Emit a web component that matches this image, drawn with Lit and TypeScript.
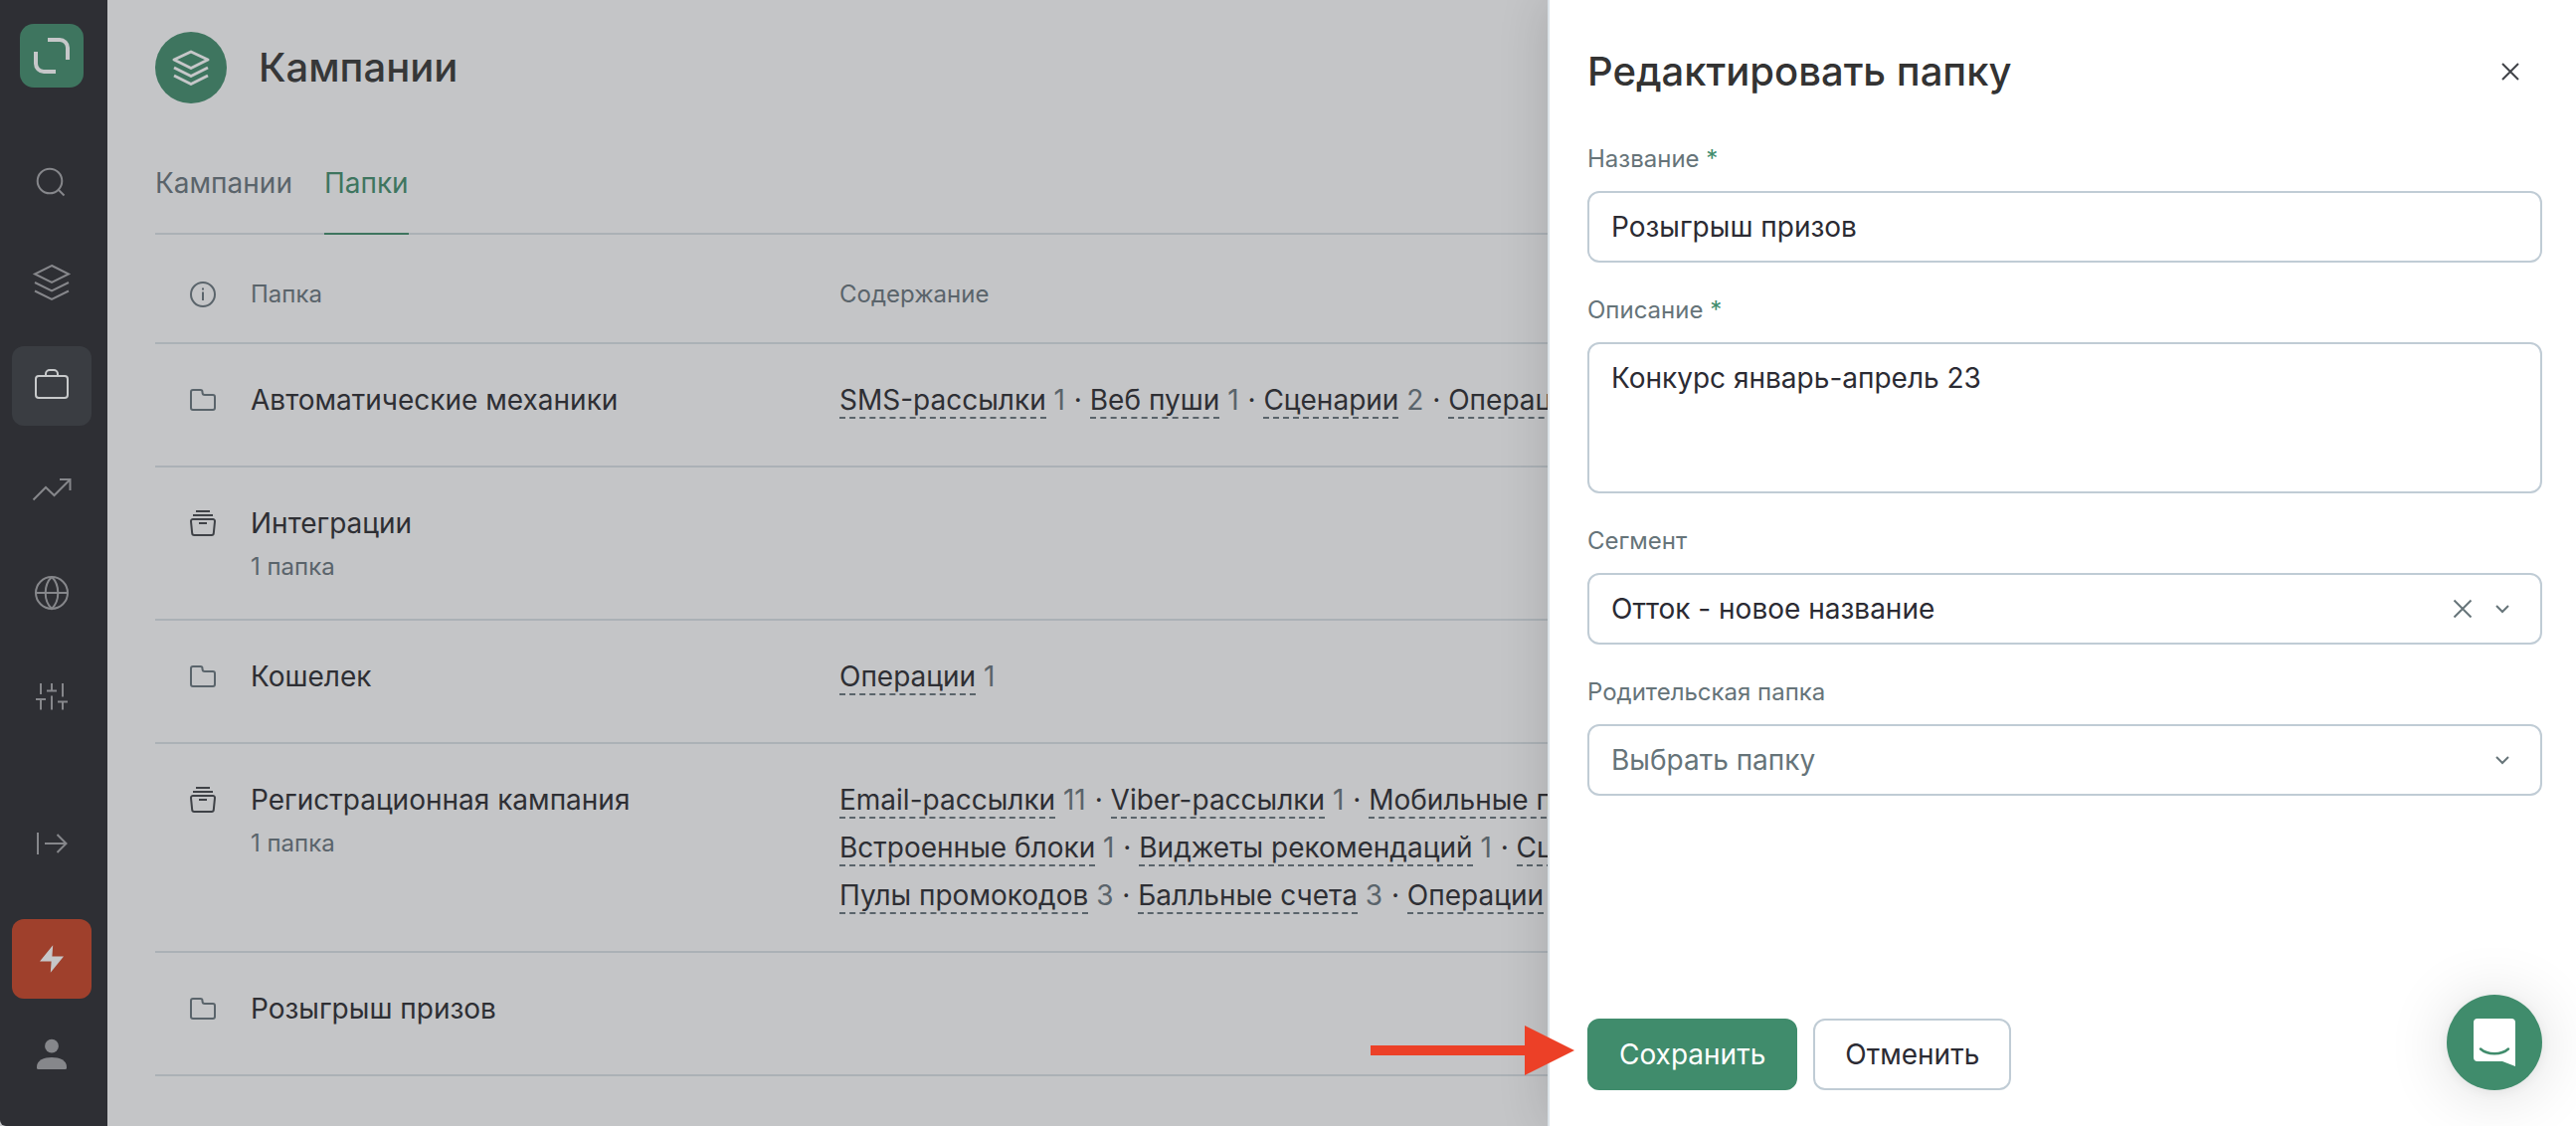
import { LitElement, html, css, svg } from "lit";
import { customElement, property, state } from "lit/decorators.js";
import { classMap } from "lit/directives/class-map.js";

type LinkItem = { label: string; count?: number };
type Row = { kind: "folder" | "archive"; name: string; note?: string; lines: LinkItem[][] };

const rows: Row[] = [
  {
    kind: "folder",
    name: "Автоматические механики",
    lines: [
      [
        { label: "SMS-рассылки", count: 1 },
        { label: "Веб пуши", count: 1 },
        { label: "Сценарии", count: 2 },
        { label: "Операции" },
      ],
    ],
  },
  { kind: "archive", name: "Интеграции", note: "1 папка", lines: [] },
  { kind: "folder", name: "Кошелек", lines: [[{ label: "Операции", count: 1 }]] },
  {
    kind: "archive",
    name: "Регистрационная кампания",
    note: "1 папка",
    lines: [
      [
        { label: "Email-рассылки", count: 11 },
        { label: "Viber-рассылки", count: 1 },
        { label: "Мобильные пуши" },
      ],
      [
        { label: "Встроенные блоки", count: 1 },
        { label: "Виджеты рекомендаций", count: 1 },
        { label: "Сценарии" },
      ],
      [
        { label: "Пулы промокодов", count: 3 },
        { label: "Балльные счета", count: 3 },
        { label: "Операции" },
      ],
    ],
  },
  { kind: "folder", name: "Розыгрыш призов", lines: [] },
];

/* Navigation glyphs, drawn in an 80 x 80 box */
const navGlyphs = {
  search: svg`<circle cx="38" cy="42" r="12.3"/><path d="M46.5 50.5 52.5 56.5"/>`,
  layers: svg`<path d="M40 23 57 31.5 40 40 23 31.5z"/><path d="M23 40 40 48.5 57 40M23 48.5 40 57 57 48.5"/>`,
  briefcase: svg`<rect x="24" y="30" width="32" height="22" rx="3"/><path d="M34 30v-2a4 4 0 0 1 4-4h4a4 4 0 0 1 4 4v2"/>`,
  trend: svg`<path d="M21.5 50.5 34 38 42.5 46 58.5 30M48 30H58.5V41"/>`,
  globe: svg`<circle cx="40" cy="40" r="16"/><path d="M24 40H56M40 24c-8.4 8-8.4 24 0 32c8.4-8 8.4-24 0-32"/>`,
  sliders: svg`<path d="M29 27V38M24 43H34M29 43V53.5M40 27V34.5M35 34.5H45M40 39.5V53.5M51 27V40.5M46 45.5H56M51 45.5V53.5"/>`,
  expand: svg`<path d="M26 29V51M33 40H54M45.5 31 54.5 40 45.5 49"/>`,
  bolt: svg`<path class="solid" d="M41.2 26.3 28 42.6H39.6L38.8 53.8 52 37.4H40.4z"/>`,
  user: svg`<circle class="solid" cx="40" cy="31.7" r="6.9"/><path class="solid" d="M25 52.5C25 46 32 43 40 43S55 46 55 52.5V53.5a1.5 1.5 0 0 1-1.5 1.5H26.5a1.5 1.5 0 0 1-1.5-1.5z"/>`,
};

@customElement("side-nav")
export class SideNav extends LitElement {
  @property() active = "briefcase";

  static styles = css`
    :host {
      display: flex;
      flex-direction: column;
      align-items: center;
      box-sizing: border-box;
      padding: 24px 16px 32px 12px;
      background: #2e2f34;
      border-bottom-left-radius: 6px;
    }
    .logo {
      display: block;
      width: 64px;
      height: 64px;
      border-radius: 14px;
      background: #3e755f;
      margin-bottom: 52px;
    }
    .group {
      display: flex;
      flex-direction: column;
      gap: 24px;
    }
    .bottom {
      margin-top: auto;
      gap: 16px;
    }
    .item {
      display: block;
      width: 80px;
      height: 80px;
      padding: 0;
      border: 0;
      border-radius: 12px;
      background: none;
      color: #86878b;
      cursor: pointer;
    }
    .item.active {
      background: #3a3d42;
      color: #c8cacb;
    }
    .item.alert {
      background: #9f402c;
      color: #c6c7c9;
    }
    .item.spaced {
      margin-bottom: 20px;
    }
    svg {
      display: block;
      fill: none;
      stroke: currentColor;
      stroke-width: 2;
    }
    .logo svg {
      stroke: #c6c7c9;
      stroke-width: 4;
    }
    .solid {
      fill: currentColor;
      stroke: none;
    }
  `;

  private item(name: keyof typeof navGlyphs, label: string, extra = "") {
    const classes = {
      item: true,
      active: name === this.active,
      alert: extra === "alert",
      spaced: extra === "spaced",
    };
    return html`<button class=${classMap(classes)} type="button" aria-label=${label}>
      <svg width="80" height="80" viewBox="0 0 80 80">${navGlyphs[name]}</svg>
    </button>`;
  }

  render() {
    return html`
      <a class="logo" href="#" aria-label="Главная">
        <svg width="64" height="64" viewBox="0 0 64 64">
          <path d="M28 16H40a8 8 0 0 1 8 8V36M16 28V40a8 8 0 0 0 8 8H36" />
        </svg>
      </a>
      <nav class="group">
        ${this.item("search", "Поиск")} ${this.item("layers", "Слои")}
        ${this.item("briefcase", "Кампании")} ${this.item("trend", "Отчеты")}
        ${this.item("globe", "Сайт")} ${this.item("sliders", "Настройки")}
      </nav>
      <div class="group bottom">
        ${this.item("expand", "Развернуть", "spaced")} ${this.item("bolt", "События", "alert")}
        ${this.item("user", "Профиль")}
      </div>
    `;
  }
}

@customElement("folders-page")
export class FoldersPage extends LitElement {
  static styles = css`
    :host {
      display: block;
      min-width: 0;
      overflow: hidden;
      box-sizing: border-box;
      padding: 32px 48px 0;
      color: #2e2f34;
    }
    header {
      display: flex;
      align-items: center;
      gap: 32px;
    }
    .badge {
      width: 72px;
      height: 72px;
      border-radius: 50%;
      background: #3e755f;
    }
    svg {
      display: block;
      fill: none;
      stroke: currentColor;
      stroke-width: 2;
    }
    .badge svg {
      stroke: #c6c7c9;
      stroke-width: 3;
      stroke-linejoin: round;
    }
    h1 {
      margin: 0;
      font-size: 40px;
      line-height: 56px;
      font-weight: 500;
      color: #363738;
    }
    .tabs {
      display: flex;
      gap: 32px;
      margin-top: 56px;
      border-bottom: 2px solid #abb1b6;
    }
    .tab {
      padding-bottom: 26px;
      margin-bottom: -2px;
      border-bottom: 2px solid transparent;
      line-height: 48px;
      color: #5a646b;
      text-decoration: none;
    }
    .tab.current {
      color: #3e755f;
      border-color: #3e755f;
    }
    table {
      width: 100%;
      border-collapse: separate;
      border-spacing: 0;
      table-layout: fixed;
    }
    .col-icon {
      width: 96px;
    }
    .col-name {
      width: 592px;
    }
    th,
    td {
      box-sizing: border-box;
      padding: 32px 0;
      border-bottom: 2px solid #abb1b6;
      text-align: left;
      vertical-align: top;
      font-weight: 400;
      line-height: 48px;
    }
    td {
      height: 124px;
    }
    th {
      padding: 40px 0 28px;
      font-size: 24px;
      line-height: 40px;
      color: #5a646b;
    }
    .icon {
      display: flex;
      align-items: center;
      height: 48px;
      padding-left: 34px;
      color: #5a646b;
    }
    th .icon {
      height: 40px;
    }
    .icon.archive {
      color: #3f4247;
    }
    .note {
      font-size: 24px;
      line-height: 40px;
      color: #5a646b;
    }
    .line {
      white-space: nowrap;
    }
    .link {
      color: inherit;
      text-decoration: none;
      border-bottom: 2px dashed #5a646b;
    }
    .count {
      margin-right: 1px;
      color: #5a646b;
    }
  `;

  private icon(kind: Row["kind"]) {
    const glyph =
      kind === "folder"
        ? svg`<path d="M4 4H11.5a2 2 0 0 1 2 2V6.5a2.5 2.5 0 0 0 2.5 2.5H24a2 2 0 0 1 2 2V22a2 2 0 0 1-2 2H4a2 2 0 0 1-2-2V6a2 2 0 0 1 2-2z"/>`
        : svg`<path d="M7 2H21M4 6H24M10 14H18M4 10H24a2 2 0 0 1 2 2.2L24.8 24.2a2 2 0 0 1-2 1.8H5.2a2 2 0 0 1-2-1.8L2 12.2a2 2 0 0 1 2-2.2z"/>`;
    return html`<span class="icon ${kind}"><svg width="28" height="28" viewBox="0 0 28 28">${glyph}</svg></span>`;
  }

  private line(items: LinkItem[]) {
    return html`<div class="line">${items.map(
      (item, i) => html`${i ? " · " : ""}<a class="link" href="#">${item.label}</a>${item.count
          ? html` <span class="count">${item.count}</span>`
          : ""}`
    )}</div>`;
  }

  render() {
    return html`
      <header>
        <span class="badge">
          <svg width="72" height="72" viewBox="0 0 72 72">
            <path d="M36 20 53 28 36 36.5 19 28zM19 36 36 44.5 53 36M19 44 36 52.5 53 44" />
          </svg>
        </span>
        <h1>Кампании</h1>
      </header>
      <nav class="tabs">
        <a class="tab" href="#">Кампании</a>
        <a class="tab current" href="#">Папки</a>
      </nav>
      <table>
        <colgroup>
          <col class="col-icon" />
          <col class="col-name" />
          <col />
        </colgroup>
        <thead>
          <tr>
            <th>
              <span class="icon">
                <svg width="28" height="28" viewBox="0 0 28 28">
                  <circle cx="14" cy="14" r="12" />
                  <path d="M14 11.5V20M14 7.5V9.5" />
                </svg>
              </span>
            </th>
            <th>Папка</th>
            <th>Содержание</th>
          </tr>
        </thead>
        <tbody>
          ${rows.map(
            (row) => html`<tr>
              <td>${this.icon(row.kind)}</td>
              <td>
                <div>${row.name}</div>
                ${row.note ? html`<div class="note">${row.note}</div>` : ""}
              </td>
              <td>${row.lines.map((items) => this.line(items))}</td>
            </tr>`
          )}
        </tbody>
      </table>
    `;
  }
}

@customElement("folder-drawer")
export class FolderDrawer extends LitElement {
  @state() private segment = "segment";

  static styles = css`
    :host {
      display: flex;
      flex-direction: column;
      box-sizing: border-box;
      padding: 44px 34px 36px 38px;
      background: #fff;
      border-left: 2px solid #dbe3e8;
      box-shadow: 0 0 48px rgba(0, 0, 0, 0.14);
      color: #2b2b33;
    }
    header {
      display: flex;
      align-items: center;
      justify-content: space-between;
      margin-bottom: 44px;
    }
    h2 {
      margin: 0;
      font-size: 40px;
      line-height: 56px;
      font-weight: 500;
      color: #333;
    }
    svg {
      display: block;
      fill: none;
      stroke: currentColor;
      stroke-width: 2;
    }
    .close,
    .clear {
      padding: 0;
      border: 0;
      background: none;
      color: #3f4247;
      cursor: pointer;
    }
    .close {
      margin-right: 12px;
    }
    form {
      display: flex;
      flex-direction: column;
      flex: 1;
      gap: 32px;
    }
    .field {
      display: grid;
      gap: 16px;
    }
    label {
      font-size: 24px;
      line-height: 32px;
      color: #667479;
    }
    .required {
      color: #408c6c;
    }
    input,
    textarea,
    select {
      display: block;
      width: 100%;
      height: 72px;
      box-sizing: border-box;
      margin: 0;
      padding: 0 22px;
      border: 2px solid #c0ccd5;
      border-radius: 12px;
      background: #fff;
      font: inherit;
      line-height: 40px;
      color: inherit;
      outline: none;
      appearance: none;
    }
    textarea {
      height: 152px;
      padding: 14px 22px;
      resize: none;
    }
    select.empty {
      color: #667479;
    }
    .picker {
      display: grid;
      align-items: center;
    }
    .picker > * {
      grid-area: 1 / 1;
    }
    .tools {
      display: flex;
      gap: 12px;
      justify-self: end;
      padding-right: 26px;
      color: #667479;
      pointer-events: none;
    }
    .clear {
      color: inherit;
      pointer-events: auto;
    }
    footer {
      display: flex;
      gap: 16px;
      margin-top: auto;
    }
    .button {
      height: 72px;
      padding: 0 30px;
      border: 2px solid #c0ccd5;
      border-radius: 12px;
      background: #fff;
      font: inherit;
      color: inherit;
      cursor: pointer;
    }
    .button.primary {
      border-color: #408c6c;
      background: #408c6c;
      color: #fff;
    }
  `;

  private chevron = html`<svg width="28" height="28" viewBox="0 0 28 28">
    <path d="M8 11 14 17 20 11" />
  </svg>`;

  private cross = html`<svg width="28" height="28" viewBox="0 0 28 28">
    <path d="M5.5 5.5 22.5 22.5M22.5 5.5 5.5 22.5" />
  </svg>`;

  render() {
    return html`
      <header>
        <h2>Редактировать папку</h2>
        <button class="close" type="button" aria-label="Закрыть">
          <svg width="40" height="40" viewBox="0 0 40 40">
            <path d="M12 12 28 28M28 12 12 28" />
          </svg>
        </button>
      </header>
      <form @submit=${(e: Event) => e.preventDefault()}>
        <div class="field">
          <label for="name">Название <span class="required">*</span></label>
          <input id="name" type="text" value="Розыгрыш призов" />
        </div>
        <div class="field">
          <label for="about">Описание <span class="required">*</span></label>
          <textarea id="about" spellcheck="false" .value=${"Конкурс январь-апрель 23"}></textarea>
        </div>
        <div class="field">
          <label for="segment">Сегмент</label>
          <div class="picker">
            <select id="segment" .value=${this.segment}>
              <option value="segment">Отток - новое название</option>
            </select>
            <span class="tools">
              <button class="clear" type="button" aria-label="Очистить" @click=${() => (this.segment = "")}>
                ${this.cross}
              </button>
              ${this.chevron}
            </span>
          </div>
        </div>
        <div class="field">
          <label for="parent">Родительская папка</label>
          <div class="picker">
            <select id="parent" class="empty">
              <option>Выбрать папку</option>
            </select>
            <span class="tools">${this.chevron}</span>
          </div>
        </div>
        <footer>
          <button class="button primary" type="submit">Сохранить</button>
          <button class="button" type="button">Отменить</button>
        </footer>
      </form>
    `;
  }
}

@customElement("app-root")
export class AppRoot extends LitElement {
  static styles = css`
    :host {
      display: grid;
      grid-template-columns: auto 1fr;
      position: relative;
      height: 100vh;
      overflow: hidden;
      background: #c4c5c7;
      font-family: Inter, "Liberation Sans", sans-serif;
      font-size: 28px;
    }
    folder-drawer {
      position: absolute;
      inset: 0 0 0 auto;
      width: min(1034px, 100%);
    }
    .pointer {
      position: absolute;
      right: 1007px;
      bottom: 51px;
      fill: #ec4027;
      pointer-events: none;
    }
    .chat {
      position: absolute;
      right: 34px;
      bottom: 36px;
      width: 96px;
      height: 96px;
      padding: 0;
      border: 0;
      border-radius: 50%;
      background: #408c6c;
      box-shadow: 0 2px 12px rgba(0, 0, 0, 0.06), 0 4px 64px rgba(0, 0, 0, 0.14);
      cursor: pointer;
    }
    .chat svg {
      display: block;
    }
  `;

  render() {
    return html`
      <side-nav></side-nav>
      <folders-page></folders-page>
      <folder-drawer></folder-drawer>
      <svg class="pointer" width="205" height="50" viewBox="0 0 205 50" aria-hidden="true">
        <path d="M0 20H155V0L205 25 155 50V30H0z" />
      </svg>
      <button class="chat" type="button" aria-label="Чат">
        <svg width="96" height="96" viewBox="0 0 96 96">
          <path fill="#fff" d="M31 24H65a4 4 0 0 1 4 4V72L56 67H31a4 4 0 0 1-4-4V28a4 4 0 0 1 4-4z" />
          <path d="M34 54.5C41 60.8 55 60.8 62 54.5" fill="none" stroke="#408c6c" stroke-width="2.5" stroke-linecap="round" />
        </svg>
      </button>
    `;
  }
}
